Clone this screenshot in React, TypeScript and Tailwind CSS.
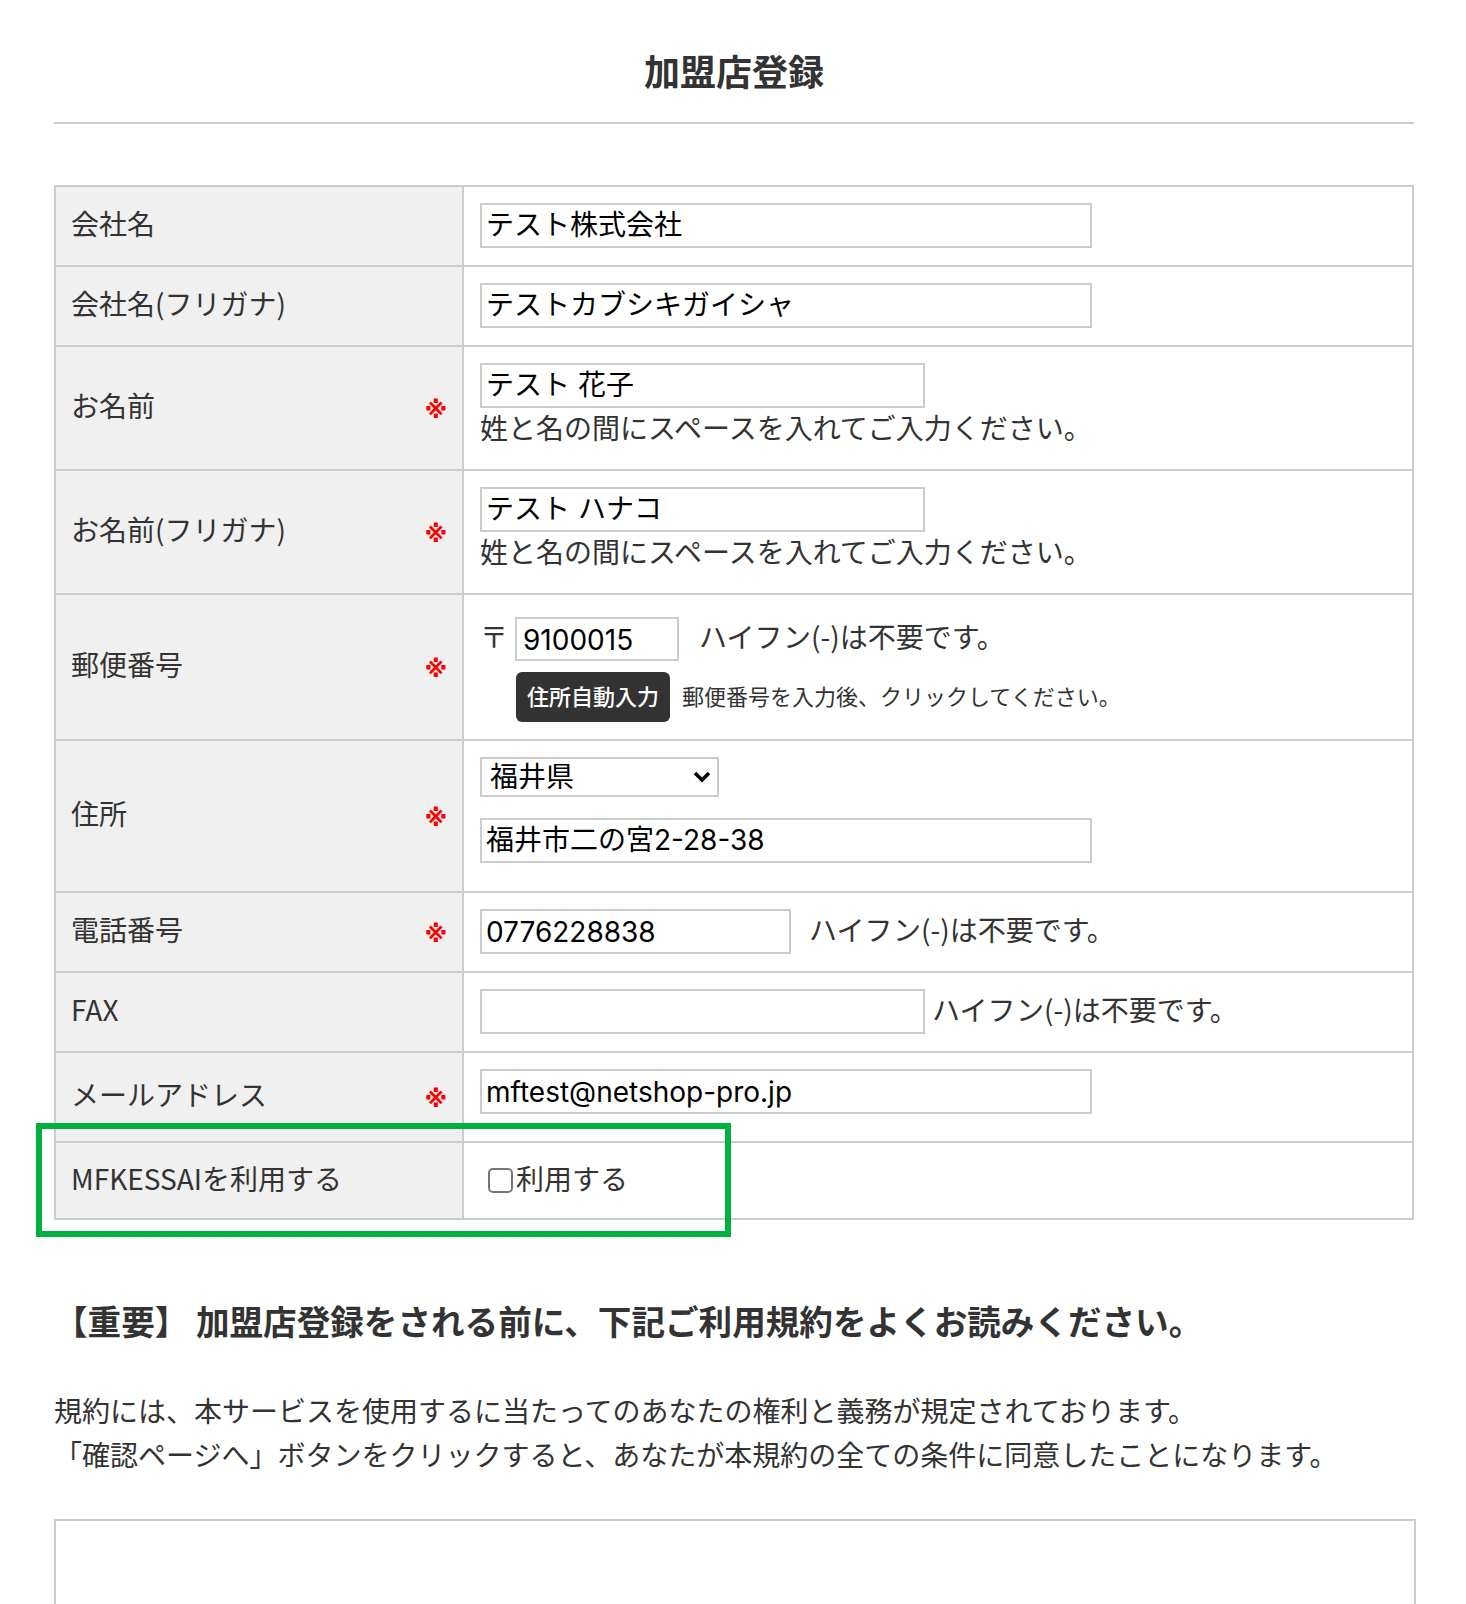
import type React from "react";

const jp = "font-['Noto_Sans_CJK_JP',sans-serif]";
const inputFont = "font-['Inter','Noto_Sans_CJK_JP',sans-serif]";

function Field({ value = "", width, latin }: { value?: string; width: string; latin?: boolean }) {
  return (
    <input
      readOnly
      defaultValue={value}
      className={`${inputFont} ${width} ${latin ? "pt-[1px]" : "pb-[5px]"} h-[45px] border-2 border-[#cccccc] bg-white px-[4px] text-[28px] text-black outline-none`}
    />
  );
}

function Row({ label, required, children, bodyClass = "", first }: {
  label: string; required?: boolean; children: React.ReactNode; bodyClass?: string; first?: boolean;
}) {
  return (
    <div className={`flex ${first ? "" : "border-t-2 border-[#cccccc]"}`}>
      <div className="w-[408px] shrink-0 bg-[#f0f0f0] border-r-2 border-[#cccccc] flex items-center justify-between pl-[15px] pr-[15px]">
        <span className="text-[28px] leading-[36px] text-[#333333] pb-[6px]">{label}</span>
        {required && (
          <span className="font-['DejaVu_Sans',sans-serif] text-[23px] leading-[24px] pt-[4px] font-bold text-[#ff0000]">※</span>
        )}
      </div>
      <div className={`flex-1 pl-[16px] ${bodyClass}`}>{children}</div>
    </div>
  );
}

function Hint({ children, className = "" }: { children: React.ReactNode; className?: string }) {
  return <span className={`text-[28px] leading-[36px] pb-[6px] text-[#333333] ${className}`}>{children}</span>;
}

export default function App() {
  return (
    <div className={`${jp} relative h-[1604px] overflow-hidden bg-white`}>
      <div className="w-[1360px] ml-[54px]">
        {/* Title */}
        <h1 className="pt-[43px] pb-[2px] text-center text-[36px] leading-[54px] font-bold text-[#333333]">加盟店登録</h1>
        <div className="mt-[23px] h-[2px] bg-[#cccccc]" />

        {/* Form table */}
        <div className="mt-[61px] border-2 border-[#cccccc]">
          <Row label="会社名" first bodyClass="pt-[16px] pb-[17px]">
            <Field value="テスト株式会社" width="w-[612px]" />
          </Row>
          <Row label="会社名(フリガナ)" bodyClass="pt-[16px] pb-[17px]">
            <Field value="テストカブシキガイシャ" width="w-[612px]" />
          </Row>
          <Row label="お名前" required bodyClass="pt-[16px] pb-[17px] flex flex-col items-start">
            <Field value="テスト 花子" width="w-[445px]" />
            <Hint className="leading-[38px]">姓と名の間にスペースを入れてご入力ください。</Hint>
          </Row>
          <Row label="お名前(フリガナ)" required bodyClass="pt-[16px] pb-[17px] flex flex-col items-start">
            <Field value="テスト ハナコ" width="w-[445px]" />
            <Hint className="leading-[38px]">姓と名の間にスペースを入れてご入力ください。</Hint>
          </Row>
          <Row label="郵便番号" required bodyClass="pt-[22px] pb-[17px]">
            <div className="flex items-center h-[44px]">
              <span className="text-[28px] leading-[36px] text-[#333333] w-[35px] pb-[6px]">〒</span>
              <input
                readOnly
                defaultValue="9100015"
                className={`${inputFont} w-[164px] h-[44px] border-2 border-[#cccccc] px-[6px] pt-[2px] text-[28px] text-black outline-none`}
              />
              <Hint className="ml-[20px]">ハイフン(-)は不要です。</Hint>
            </div>
            <div className="flex items-center mt-[11px] ml-[36px]">
              <button className="w-[154px] h-[50px] pb-[4px] rounded-[6px] bg-[#333333] text-white text-[22px] font-medium">住所自動入力</button>
              <span className="ml-[12px] pb-[4px] text-[22px] text-[#333333]">郵便番号を入力後、クリックしてください。</span>
            </div>
          </Row>
          <Row label="住所" required bodyClass="pt-[16px] pb-[28px]">
            <div className="relative w-[239px] h-[40px]">
              <select
                defaultValue="福井県"
                className="appearance-none w-full h-full border-2 border-[#cccccc] bg-white pl-[8px] pb-[4px] text-[28px] leading-none text-black outline-none"
              >
                <option>福井県</option>
              </select>
              <svg className="absolute right-[8px] top-[14px] pointer-events-none" width="18" height="12" viewBox="0 0 18 12">
                <path d="M2 2 L9 9 L16 2" fill="none" stroke="#000" strokeWidth="3.5" />
              </svg>
            </div>
            <div className="mt-[21px]">
              <Field value="福井市二の宮2-28-38" width="w-[612px]" />
            </div>
          </Row>
          <Row label="電話番号" required bodyClass="pt-[16px] pb-[17px] flex items-center">
            <Field value="0776228838" width="w-[311px]" latin />
            <Hint className="ml-[18px]">ハイフン(-)は不要です。</Hint>
          </Row>
          <Row label="FAX" bodyClass="pt-[16px] pb-[17px] flex items-center">
            <Field width="w-[445px]" />
            <Hint className="ml-[7px]">ハイフン(-)は不要です。</Hint>
          </Row>
          <Row label="メールアドレス" required bodyClass="pt-[16px] pb-[27px]">
            <Field value="mftest@netshop-pro.jp" width="w-[612px]" latin />
          </Row>
          <Row label="MFKESSAIを利用する" bodyClass="h-[75px] flex items-center">
            <label className="flex items-center ml-[8px]">
              <input type="checkbox" className="appearance-none w-[25px] h-[25px] rounded-[5px] border-2 border-[#767676] bg-white" />
              <span className="ml-[3px] pb-[6px] text-[28px] leading-[36px] text-[#333333]">利用する</span>
            </label>
          </Row>
        </div>

        {/* Notice */}
        <h2 className="mt-[76px] text-[33.6px] leading-[50px] font-bold text-[#333333]">【重要】 加盟店登録をされる前に、下記ご利用規約をよくお読みください。</h2>
        <p className="mt-[42px] text-[28px] leading-[44px] text-[#333333]">
          規約には、本サービスを使用するに当たってのあなたの権利と義務が規定されております。
          <br />
          「確認ページへ」ボタンをクリックすると、あなたが本規約の全ての条件に同意したことになります。
        </p>
        <div className="mt-[43px] h-[400px] w-[1362px] border-2 border-[#cccccc]" />
      </div>

      {/* Highlight annotation */}
      <div className="absolute left-[36px] top-[1123px] w-[695px] h-[114px] border-[6px] border-[#00b140]" />
    </div>
  );
}
